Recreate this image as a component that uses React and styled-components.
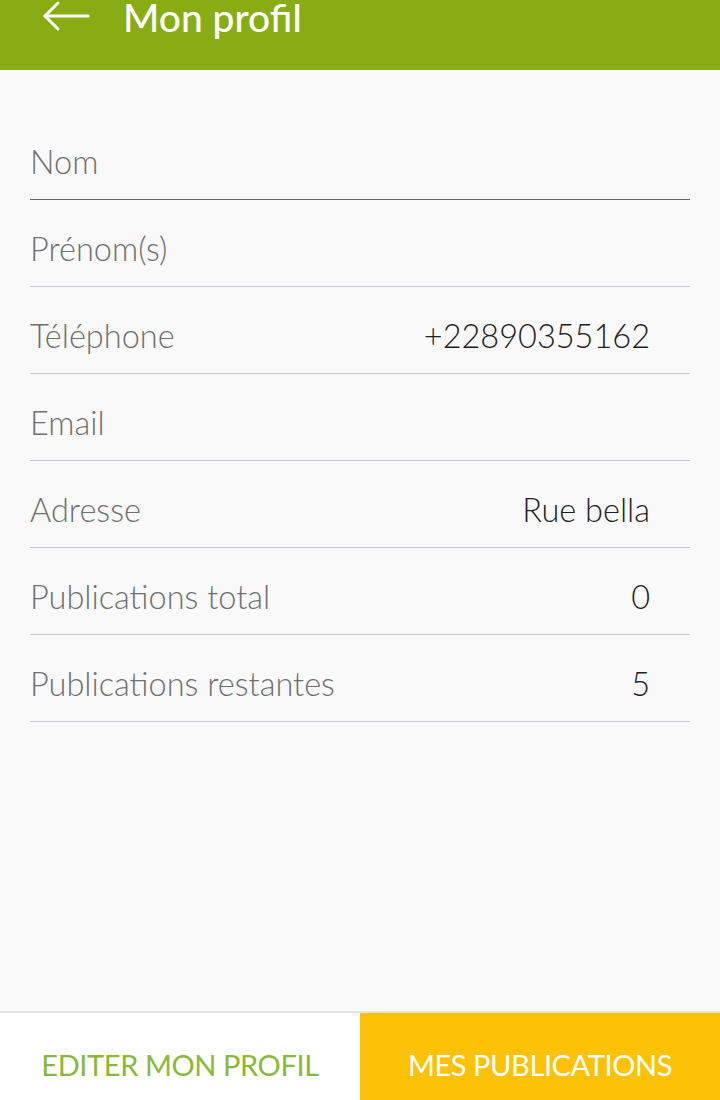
import React from 'react';
import styled, { createGlobalStyle } from 'styled-components';

const Global = createGlobalStyle`
	html, body {
		margin: 0;
		padding: 0;
		background: #f9f9f9;
		font-family: 'Lato', 'Liberation Sans', sans-serif;
	}
`;

const Page = styled.div`
	display: flex;
	flex-direction: column;
	height: 1100px;
	overflow: hidden;
`;

const Header = styled.header`
	height: 70px;
	background: #88ac14;
	display: flex;
	align-items: flex-start;
	padding-left: 42px;
	box-sizing: border-box;
	gap: 33px;
	color: #fff;
`;

const BackButton = styled.div`
	width: 48px;
	height: 32px;
	display: flex;
	align-items: center;
`;

const Title = styled.h1`
	margin: 0;
	font-size: 39px;
	line-height: 34px;
	font-weight: 500;
`;

const Main = styled.main`
	flex: 1;
	padding: 43px 30px 0;
`;

const Row = styled.div`
	display: flex;
	justify-content: space-between;
	align-items: center;
	padding: 31px 40px 19px 0;
	border-bottom: 1px solid ${(p) => (p.$active ? '#666' : '#c8c8d2')};
	height: 36px;
	font-size: 32.5px;
	font-weight: 300;
	line-height: 36px;
`;

const Label = styled.span`
	color: #6f6f6f;
`;

const Value = styled.span`
	color: #1e1e1e;
`;

const Footer = styled.footer`
	display: grid;
	grid-template-columns: 1fr 1fr;
	height: 87px;
	border-top: 2px solid #e4e4e4;
`;

const Tab = styled.button`
	border: none;
	margin: 0;
	font-family: inherit;
	font-size: 29px;
	font-weight: 400;
	text-transform: uppercase;
	padding: 15px 0 0;
	background: ${(p) => (p.$primary ? '#fdc106' : '#fff')};
	color: ${(p) => (p.$primary ? '#fff' : '#8ab83a')};
	letter-spacing: -0.4px;
`;

const fields = [
	{ label: 'Nom', value: '', active: true },
	{ label: 'Prénom(s)', value: '' },
	{ label: 'Téléphone', value: '+22890355162' },
	{ label: 'Email', value: '' },
	{ label: 'Adresse', value: 'Rue bella' },
	{ label: 'Publications total', value: '0' },
	{ label: 'Publications restantes', value: '5' },
];

const App = () => (
	<Page>
		<Global />
		<Header>
			<BackButton>
				<svg width="48" height="32" viewBox="0 0 48 32" fill="none" stroke="#fff" strokeWidth="3" strokeLinecap="round" strokeLinejoin="round">
					<path d="M46 16H3" />
					<path d="M16 3L3 16l13 13" />
				</svg>
			</BackButton>
			<Title>Mon profil</Title>
		</Header>
		<Main>
			{fields.map((f) => (
				<Row key={f.label} $active={f.active}>
					<Label>{f.label}</Label>
					<Value>{f.value}</Value>
				</Row>
			))}
		</Main>
		<Footer>
			<Tab>Editer mon profil</Tab>
			<Tab $primary>Mes publications</Tab>
		</Footer>
	</Page>
);

export default App;
